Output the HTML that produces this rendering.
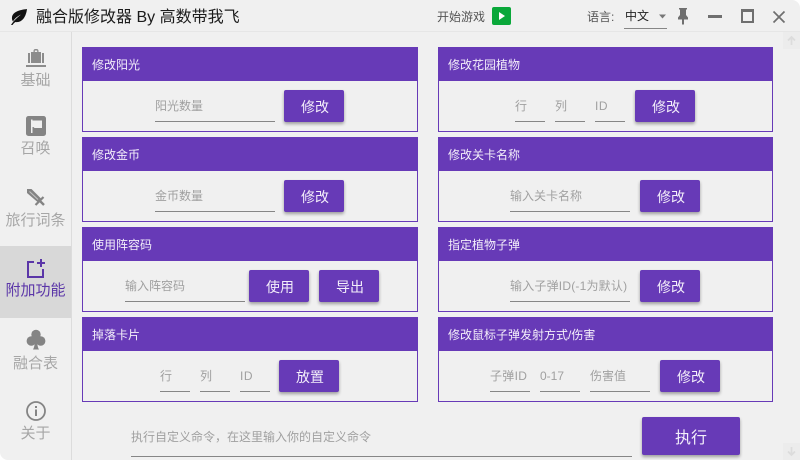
<!DOCTYPE html>
<html lang="zh"><head><meta charset="utf-8"><title>融合版修改器</title>
<style>
html,body{margin:0;padding:0;width:800px;height:460px;overflow:hidden;background:#fff}
body{font-family:"Liberation Sans","Noto Sans CJK SC",sans-serif;position:relative}
#app{position:absolute;inset:0;background:#f0f0f0;border-radius:0 8px 0 8px;overflow:hidden}
.a{position:absolute;white-space:nowrap}
.card{position:absolute;width:336px;height:85px;box-sizing:border-box;border:1px solid #673ab7}
.hd{position:absolute;left:-1px;top:-1px;right:-1px;height:34px;background:#673ab7;color:#f3eefa;font-size:12px;line-height:36px;padding-left:10px}
.ph{position:absolute;height:31px;line-height:32px;font-size:12px;color:#a0a0a0;border-bottom:1px solid #868686;box-sizing:content-box;white-space:nowrap;overflow:hidden}
.btn{position:absolute;width:60px;height:32px;background:#673ab7;color:#f3eefa;font-size:14px;line-height:34px;text-indent:2px;text-align:center;border-radius:2px;box-shadow:0 2px 3px rgba(0,0,0,.35)}
.nav{position:absolute;left:0;width:71px;text-align:center;font-size:15px;color:#a6a6a6;line-height:18px}
</style></head><body>
<div id="app">
<!-- title bar -->
<div class="a" style="left:0;top:31px;width:800px;height:1px;background:#e6e6e6"></div>
<svg class="a" style="left:9px;top:8px" width="18" height="18" viewBox="0 0 18 18"><path d="M18 1C10 2 4 4 3 9C2.700 11 3.300 12.500 4 13.500C6 10 9 8 12 6.500C9 9 5 12 2 17H3.500C4.500 15.500 5.500 14.500 6.500 14C13 15 17 9 18 1Z" fill="#111"/></svg>
<div class="a" style="left:36px;top:7px;font-size:16px;line-height:22px;color:#1c1c1c">融合版修改器 By 高数带我飞</div>
<div class="a" style="left:437px;top:8px;font-size:12px;line-height:18px;color:#555">开始游戏</div>
<div class="a" style="left:492px;top:7px;width:19px;height:18px;background:#0aa83a;border-radius:2px"></div>
<svg class="a" style="left:492px;top:7px" width="19" height="18"><path d="M7 5L13 9L7 13Z" fill="#fff"/></svg>
<div class="a" style="left:587px;top:8px;font-size:12px;line-height:18px;color:#555">语言:</div>
<div class="a" style="left:624px;top:8px;width:43px;height:21px;border-bottom:1px solid #868686;font-size:12px;line-height:16px;color:#222;padding-left:1px;box-sizing:border-box">中文</div>
<svg class="a" style="left:658px;top:14px" width="9" height="6"><path d="M1 0.500H8L4.500 4.500Z" fill="#777"/></svg>
<svg class="a" style="left:675px;top:6px" width="16" height="20"><path d="M4 2H12V3.500H11V9L13 11.500V13.500H9V18.500H7V13.500H3V11.500L5 9V3.500H4Z" fill="#6f6f6f"/></svg>
<div class="a" style="left:708px;top:15px;width:14px;height:3px;background:#6f6f6f"></div>
<div class="a" style="left:741px;top:9px;width:13px;height:14px;box-sizing:border-box;border:2px solid #6f6f6f;border-top-width:3px"></div>
<svg class="a" style="left:772px;top:10px" width="14" height="14"><path d="M1.500 1.500L12.500 12.500M12.500 1.500L1.500 12.500" stroke="#6f6f6f" stroke-width="1.700" fill="none"/></svg>
<!-- sidebar -->
<div class="a" style="left:71px;top:32px;width:1px;height:428px;background:#dcdcdc"></div>
<div class="a" style="left:0;top:246px;width:71px;height:72px;background:#d8d8d8"></div>
<svg class="a" style="left:26px;top:48px" width="20" height="20" fill="#8c8c8c"><path d="M5 4H7.500V2.800C7.500 1.800 8.300 1 9.300 1H10.700C11.700 1 12.500 1.800 12.500 2.800V4H15V15H5ZM8.800 2.500V4H11.200V2.500Z" fill-rule="evenodd"/><rect x="2" y="5" width="2" height="10"/><rect x="16" y="5" width="2" height="10"/><rect x="0" y="17" width="20" height="2"/></svg>
<div class="nav" style="top:72px">基础</div>
<svg class="a" style="left:26px;top:116px" width="20" height="20"><rect width="20" height="20" rx="2.500" fill="#848484"/><path d="M5 3.500H6.500V4.500H16V12H8.500L7.500 11H6.500V17H5Z" fill="#f0f0f0"/></svg>
<div class="nav" style="top:140px">召唤</div>
<svg class="a" style="left:26px;top:187px" width="20" height="20"><path d="M1 2H5.500L15 11.500L11.500 15L1 6Z" fill="#848484"/><path d="M3.500 4.500L12 12.500" stroke="#c4c4c4" stroke-width="1" fill="none"/><path d="M17.500 10L9.500 18" stroke="#848484" stroke-width="2.200" fill="none"/><path d="M14 14L18 18" stroke="#848484" stroke-width="2.400" fill="none"/></svg>
<div class="nav" style="top:212px">旅行词条</div>
<svg class="a" style="left:26px;top:258px" width="20" height="20"><path d="M8 4H2V19H17V11" fill="none" stroke="#5b36a8" stroke-width="2"/><path d="M15 1V9M11 5H19" stroke="#5b36a8" stroke-width="2" fill="none"/></svg>
<div class="nav" style="top:282px;color:#5b36a8">附加功能</div>
<svg class="a" style="left:26px;top:329px" width="20" height="22" fill="#848484"><circle cx="10" cy="5.500" r="4.700"/><circle cx="5.300" cy="12" r="4.700"/><circle cx="14.700" cy="12" r="4.700"/><path d="M9 9H11C11 14 11.500 18 13 20.500H7C8.500 18 9 14 9 9Z"/></svg>
<div class="nav" style="top:355px">融合表</div>
<svg class="a" style="left:26px;top:401px" width="20" height="20"><circle cx="10" cy="10" r="9" fill="none" stroke="#848484" stroke-width="1.800"/><rect x="9" y="8.500" width="2" height="6.500" fill="#848484"/><rect x="9" y="5" width="2" height="2" fill="#848484"/></svg>
<div class="nav" style="top:425px">关于</div>
<!-- scrollbar -->
<div class="a" style="left:783px;top:32px;width:17px;height:17px;background:#ececec"></div>
<svg class="a" style="left:783px;top:32px" width="17" height="17"><path d="M8.500 13V5M5 8.500L8.500 5L12 8.500" stroke="#dcdcdc" stroke-width="1.800" fill="none"/></svg>
<div class="a" style="left:783px;top:443px;width:17px;height:17px;background:#ececec"></div>
<svg class="a" style="left:783px;top:443px" width="17" height="17"><path d="M8.500 4V12M5 8.500L8.500 12L12 8.500" stroke="#dcdcdc" stroke-width="1.800" fill="none"/></svg>
<!-- left cards -->
<div class="card" style="left:82px;top:47px"><div class="hd">修改阳光</div></div>
<div class="ph" style="left:155px;top:90px;width:120px">阳光数量</div>
<div class="btn" style="left:284px;top:90px">修改</div>
<div class="card" style="left:82px;top:137px"><div class="hd">修改金币</div></div>
<div class="ph" style="left:155px;top:180px;width:120px">金币数量</div>
<div class="btn" style="left:284px;top:180px">修改</div>
<div class="card" style="left:82px;top:227px"><div class="hd">使用阵容码</div></div>
<div class="ph" style="left:125px;top:270px;width:120px">输入阵容码</div>
<div class="btn" style="left:249px;top:270px">使用</div>
<div class="btn" style="left:319px;top:270px">导出</div>
<div class="card" style="left:82px;top:317px"><div class="hd">掉落卡片</div></div>
<div class="ph" style="left:160px;top:360px;width:30px">行</div>
<div class="ph" style="left:200px;top:360px;width:30px">列</div>
<div class="ph" style="left:240px;top:360px;width:30px;letter-spacing:.5px">ID</div>
<div class="btn" style="left:279px;top:360px">放置</div>
<!-- right cards -->
<div class="card" style="left:438px;top:47px;width:335px"><div class="hd">修改花园植物</div></div>
<div class="ph" style="left:515px;top:90px;width:30px">行</div>
<div class="ph" style="left:555px;top:90px;width:30px">列</div>
<div class="ph" style="left:595px;top:90px;width:30px;letter-spacing:.5px">ID</div>
<div class="btn" style="left:635px;top:90px">修改</div>
<div class="card" style="left:438px;top:137px;width:335px"><div class="hd">修改关卡名称</div></div>
<div class="ph" style="left:510px;top:180px;width:120px">输入关卡名称</div>
<div class="btn" style="left:640px;top:180px">修改</div>
<div class="card" style="left:438px;top:227px;width:335px"><div class="hd">指定植物子弹</div></div>
<div class="ph" style="left:510px;top:270px;width:120px;letter-spacing:.2px">输入子弹ID(-1为默认)</div>
<div class="btn" style="left:640px;top:270px">修改</div>
<div class="card" style="left:438px;top:317px;width:335px"><div class="hd">修改鼠标子弹发射方式/伤害</div></div>
<div class="ph" style="left:490px;top:360px;width:40px;letter-spacing:.3px">子弹ID</div>
<div class="ph" style="left:540px;top:360px;width:40px">0-17</div>
<div class="ph" style="left:590px;top:360px;width:60px">伤害值</div>
<div class="btn" style="left:660px;top:360px">修改</div>
<!-- bottom -->
<div class="ph" style="left:131px;top:421px;width:501px;height:35px;line-height:33px">执行自定义命令，在这里输入你的自定义命令</div>
<div class="btn" style="left:642px;top:417px;width:98px;height:38px;line-height:44px;font-size:16px;text-indent:0">执行</div>
</div>
</body></html>
